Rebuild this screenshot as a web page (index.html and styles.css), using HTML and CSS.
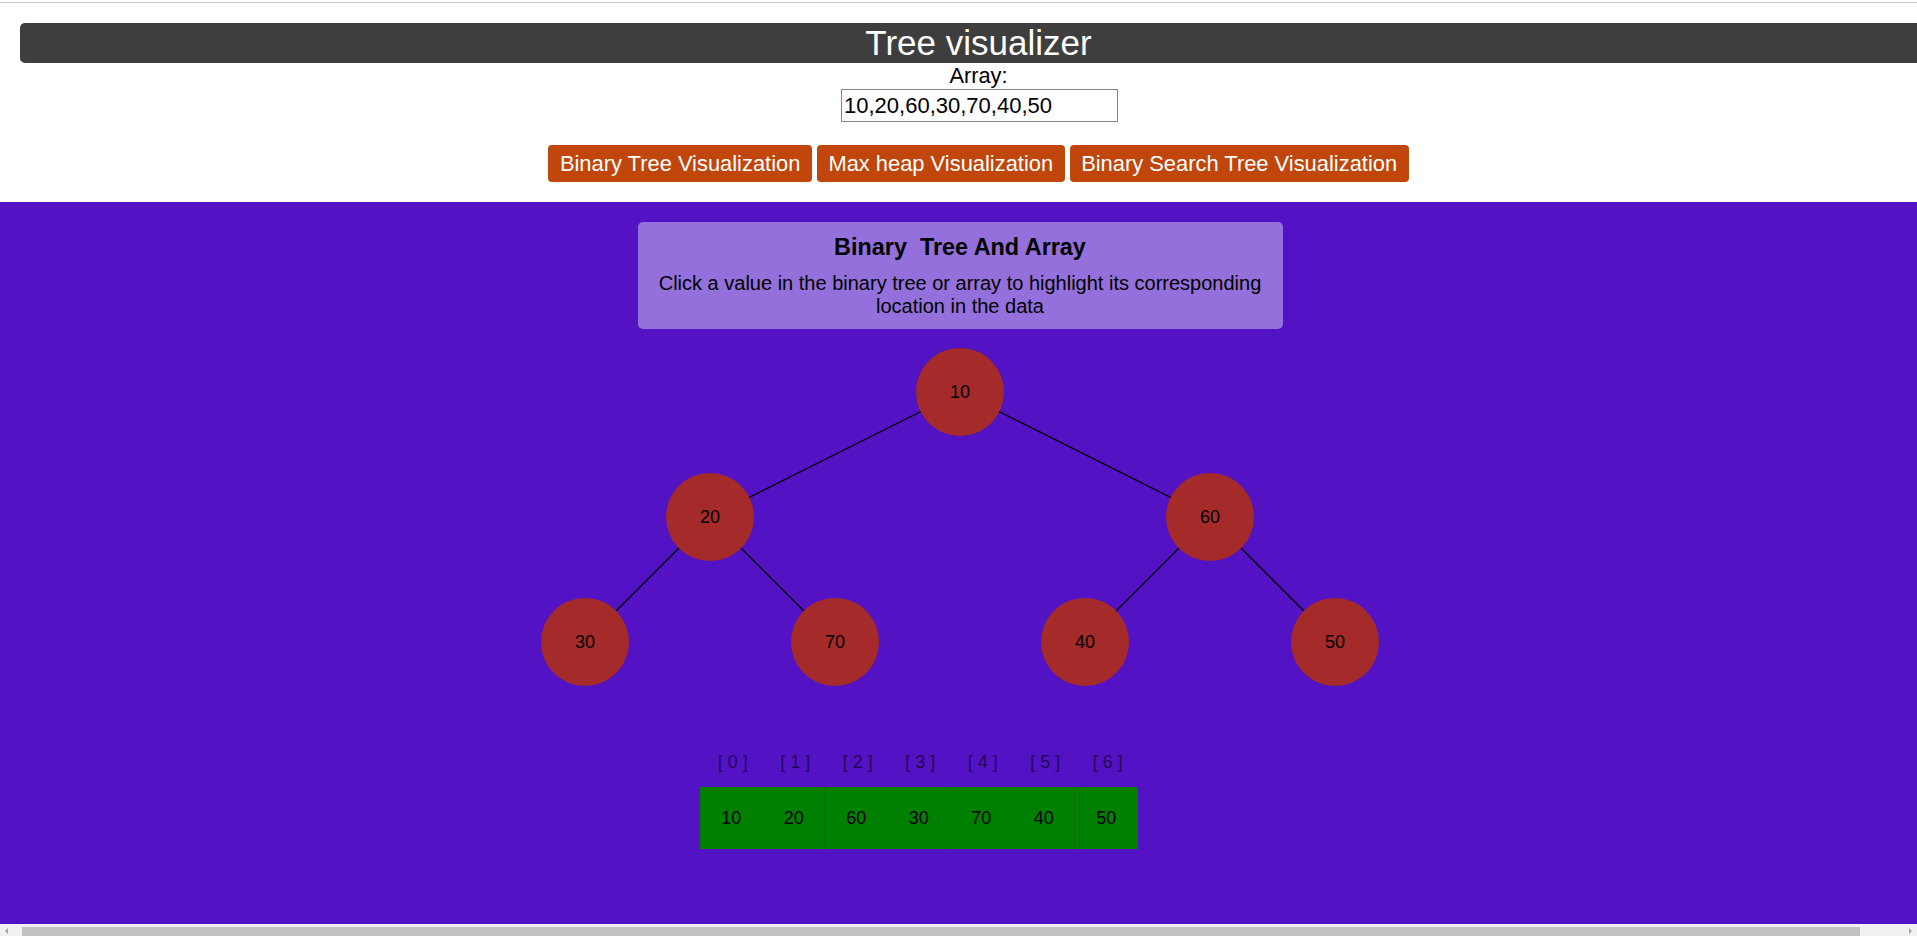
FILE: index.html
```html
<!DOCTYPE html>
<html lang="en">
<head>
<meta charset="utf-8">
<title>Tree visualizer</title>
<link rel="stylesheet" href="styles.css">
</head>
<body>
  <div class="topline"></div>
  <div class="top">
    <div class="header"><h1 class="title">Tree visualizer</h1></div>
    <label class="array-label" for="arr">Array:</label>
    <input class="array-input" id="arr" type="text" value="10,20,60,30,70,40,50">
    <div class="buttons">
      <button class="btn">Binary Tree Visualization</button>
      <button class="btn">Max heap Visualization</button>
      <button class="btn">Binary Search Tree Visualization</button>
    </div>
  </div>
  <main class="stage">
    <div class="card">
      <h3 class="card-title">Binary&nbsp; Tree And Array</h3>
      <p class="card-text">Click a value in the binary tree or array to highlight its corresponding location in the data</p>
    </div>
    <svg class="tree" width="840" height="338" viewBox="0 0 840 338">
      <g class="edges">
        <line x1="420" y1="44" x2="170" y2="169"/>
        <line x1="420" y1="44" x2="670" y2="169"/>
        <line x1="170" y1="169" x2="45" y2="294"/>
        <line x1="170" y1="169" x2="295" y2="294"/>
        <line x1="670" y1="169" x2="545" y2="294"/>
        <line x1="670" y1="169" x2="795" y2="294"/>
      </g>
      <g class="nodes">
        <circle cx="420" cy="44" r="44"/><text x="420" y="44">10</text>
        <circle cx="170" cy="169" r="44"/><text x="170" y="169">20</text>
        <circle cx="670" cy="169" r="44"/><text x="670" y="169">60</text>
        <circle cx="45" cy="294" r="44"/><text x="45" y="294">30</text>
        <circle cx="295" cy="294" r="44"/><text x="295" y="294">70</text>
        <circle cx="545" cy="294" r="44"/><text x="545" y="294">40</text>
        <circle cx="795" cy="294" r="44"/><text x="795" y="294">50</text>
      </g>
    </svg>
    <div class="array-wrap">
      <div class="indices">
        <span>[ 0 ]</span><span>[ 1 ]</span><span>[ 2 ]</span><span>[ 3 ]</span><span>[ 4 ]</span><span>[ 5 ]</span><span>[ 6 ]</span>
      </div>
      <div class="cells">
        <span class="cell">10</span><span class="cell">20</span><span class="cell">60</span><span class="cell">30</span><span class="cell">70</span><span class="cell">40</span><span class="cell">50</span>
      </div>
    </div>
  </main>
  <div class="hscroll">
    <svg class="arrow" width="14" height="10" viewBox="0 0 14 10"><path d="M5 5 L8 2 L8 8 Z"/></svg>
    <div class="thumb"></div>
    <svg class="arrow" width="14" height="10" viewBox="0 0 14 10"><path d="M9 5 L6 2 L6 8 Z"/></svg>
  </div>
</body>
</html>
```

FILE: styles.css
```css
html {
  height: 100%;
  overflow: hidden;
}

body {
  margin: 0;
  height: 100%;
  display: flex;
  flex-direction: column;
  font-family: "Liberation Sans", Arial, sans-serif;
  color: #000;
  background: #fff;
}

.topline {
  flex-shrink: 0;
  height: 1px;
  margin-top: 2px;
  background: #c6c6c6;
}

.top {
  flex-shrink: 0;
  width: 1917px;
  margin: 20px 0 0 20px;
  display: flex;
  flex-direction: column;
  align-items: center;
}

.header {
  align-self: stretch;
  height: 40px;
  background: #3e3e3e;
  border-radius: 5px;
}

.title {
  margin: 0;
  font-size: 35px;
  font-weight: normal;
  line-height: 40px;
  text-align: center;
  color: #fff;
}

.array-label {
  font-size: 21.8px;
  line-height: 25px;
  height: 25px;
}

.array-input {
  box-sizing: border-box;
  width: 277px;
  height: 33px;
  margin: 1px 0 0 2px;
  padding: 0 2px;
  border: 1px solid #858585;
  border-radius: 0;
  font-family: "Liberation Sans", Arial, sans-serif;
  font-size: 22px;
  color: #000;
  outline: none;
}

.buttons {
  display: flex;
  gap: 5px;
  margin-top: 23px;
  margin-bottom: 20px;
}

.btn {
  height: 37px;
  padding: 0 11.5px;
  border: none;
  border-radius: 4px;
  background: #c1460c;
  color: #fff;
  font-family: "Liberation Sans", Arial, sans-serif;
  font-size: 21.9px;
  line-height: 25px;
}

.stage {
  flex: 1;
  background: #5312c4;
  padding: 20px 0 0 3px;
  display: flex;
  flex-direction: column;
  align-items: center;
}

.card {
  box-sizing: border-box;
  width: 645px;
  padding: 11.5px 10px 10px;
  background: #9370db;
  border-radius: 5px;
  text-align: center;
}

.card-title {
  margin: 0;
  font-size: 23.4px;
  line-height: 27px;
  font-weight: bold;
}

.card-text {
  margin: 11px 0 0;
  font-size: 20px;
  line-height: 23.5px;
}

.tree {
  display: block;
  margin-top: 19.5px;
}

.edges line {
  stroke: #000;
  stroke-width: 1.3;
}

.nodes circle {
  fill: #a52a2a;
}

.nodes text {
  font-family: "Liberation Sans", Arial, sans-serif;
  font-size: 18px;
  fill: #000;
  text-anchor: middle;
  dominant-baseline: central;
}

.array-wrap {
  width: 520px;
  margin-top: 66px;
}

.indices {
  display: grid;
  grid-template-columns: repeat(7, 62.5px);
  font-size: 18px;
  line-height: 21px;
  color: rgba(0, 0, 0, 0.6);
}

.indices span {
  text-align: center;
  padding-left: 3px;
}

.cells {
  display: grid;
  grid-template-columns: repeat(7, 62.5px);
  width: 437.5px;
  height: 62px;
  margin-top: 14px;
  background: #008000;
}

.cell {
  display: flex;
  align-items: center;
  justify-content: center;
  font-size: 18px;
}

.cell:nth-child(2n) {
  box-shadow: inset -1px 0 0 rgba(0, 0, 0, 0.12);
}

.hscroll {
  flex-shrink: 0;
  height: 12px;
  background: #f1f1f1;
  display: flex;
  align-items: flex-end;
  border-top: 1px solid #f7f0fb;
  box-sizing: border-box;
}

.arrow {
  display: block;
  flex-shrink: 0;
}

.arrow path {
  fill: #a3a3a3;
}

.thumb {
  flex: 1;
  height: 9px;
  margin: 0 43px 0 8px;
  background: #c1c1c1;
}
```
